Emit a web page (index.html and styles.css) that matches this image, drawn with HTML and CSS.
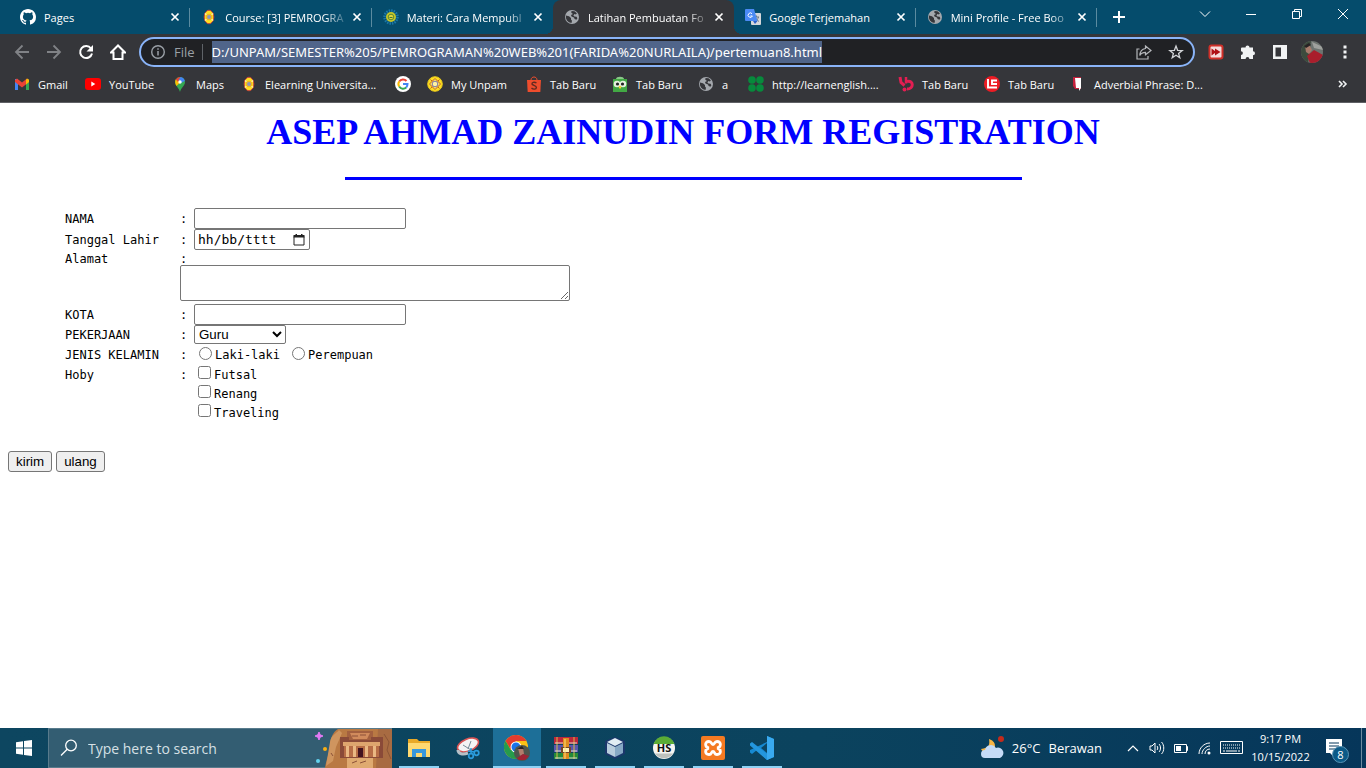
FILE: index.html
```
<!DOCTYPE html>
<html lang="id">
<head>
<meta charset="utf-8">
<meta name="viewport" content="width=device-width, initial-scale=1">
<title>Latihan Pembuatan Form</title>
<link rel="stylesheet" href="styles.css">
</head>
<body>
<svg class="defs" aria-hidden="true">
  <symbol id="x" viewBox="0 0 16 16"><path d="M4.5 4.5l7 7m0-7l-7 7" stroke="#fff" stroke-width="1.7" fill="none"/></symbol>
  <symbol id="globe" viewBox="0 0 16 16"><circle cx="8" cy="8" r="7" fill="#a4a8ad"/><path d="M2 6.5l3 .8 2 1.700v1.500l1 1.200-.5 2.300A6 6 0 0 1 2 6.500zM7.500 2l3 .3 2.400 2-1 1.200-1.500-.5-1 1.500 1 1 2.200.2.800 1.500-1 1.600-1.800-.8-.6-1.600-2.500-.9-.5-1.500L9 5 7.300 3.800z" fill="#35363a"/></symbol>
  <symbol id="unpam" viewBox="0 0 16 16"><ellipse cx="8" cy="8" rx="4.800" ry="6.800" fill="#ffdf20" stroke="#c9443a"/><path d="M4 4.500l8 7m0-7l-8 7" stroke="#fff6b0" stroke-width="1.200"/><circle cx="8" cy="8" r="2.600" fill="#8d96bb" stroke="#f0b820" stroke-width="1.400"/></symbol>
</svg>

<header>
  <nav class="tabstrip" aria-label="Tab">
    <div class="tabs">
      <div class="tab"><svg class="ico" viewBox="0 0 16 16"><path fill="#fff" d="M8 0C3.580 0 0 3.580 0 8c0 3.540 2.290 6.530 5.470 7.590.4.070.55-.17.55-.38 0-.19-.01-.82-.01-1.490-2.010.37-2.530-.49-2.690-.94-.09-.23-.48-.94-.82-1.130-.28-.15-.68-.52-.01-.53.63-.01 1.080.58 1.230.82.72 1.210 1.870.87 2.330.66.07-.52.28-.87.51-1.070-1.780-.2-3.640-.89-3.640-3.950 0-.87.31-1.590.82-2.150-.08-.2-.36-1.020.08-2.120 0 0 .67-.21 2.200.82a7.600 7.600 0 0 1 4 0c1.530-1.040 2.200-.82 2.200-.82.44 1.100.16 1.920.08 2.120.51.56.82 1.270.82 2.150 0 3.070-1.870 3.750-3.650 3.950.29.25.54.73.54 1.480 0 1.070-.01 1.930-.01 2.200 0 .21.15.46.55.38A8 8 0 0 0 16 8c0-4.420-3.580-8-8-8z"/></svg><span class="title">Pages</span><button class="close" aria-label="Tutup"><svg class="ico"><use href="#x"/></svg></button></div>
      <div class="tab"><svg class="ico"><use href="#unpam"/></svg><span class="title fade">Course: [3] PEMROGRA</span><button class="close" aria-label="Tutup"><svg class="ico"><use href="#x"/></svg></button></div>
      <div class="tab nosep"><svg class="ico" viewBox="0 0 16 16"><circle cx="8" cy="8" r="6.500" fill="none" stroke="#1a78a8" stroke-width="2.500" stroke-dasharray="1.500 1"/><circle cx="8" cy="8" r="5" fill="#c3c62a"/><circle cx="8" cy="8" r="2.800" fill="#dfd43a" stroke="#5b8a30"/><path d="M6.500 8.500h3" stroke="#3b7535"/></svg><span class="title fade">Materi: Cara Mempubl</span><button class="close" aria-label="Tutup"><svg class="ico"><use href="#x"/></svg></button></div>
      <div class="tab active"><svg class="ico"><use href="#globe"/></svg><span class="title fade">Latihan Pembuatan Fo</span><button class="close" aria-label="Tutup"><svg class="ico"><use href="#x"/></svg></button></div>
      <div class="tab"><svg class="ico" viewBox="0 0 16 16"><rect x="6" y="4" width="10" height="12" rx="1" fill="#d5d7da"/><path d="M9 8h5m-2.500-1.500V8m2 0c-.5 2-2 3.500-3.500 4.500m.5-3.500c1 1.500 2 2.500 3.500 3.500" stroke="#697886" fill="none"/><path d="M1 0h8l3.500 12H1a1 1 0 0 1-1-1V1a1 1 0 0 1 1-1z" fill="#4a8af4"/><path d="M7 4.700A2.200 2.200 0 1 0 7.400 7H5.400" stroke="#fff" fill="none"/><path d="M8 12h4.500L10 15z" fill="#2b5fc8"/></svg><span class="title">Google Terjemahan</span><button class="close" aria-label="Tutup"><svg class="ico"><use href="#x"/></svg></button></div>
      <div class="tab"><svg class="ico"><use href="#globe"/></svg><span class="title fade">Mini Profile - Free Boo</span><button class="close" aria-label="Tutup"><svg class="ico"><use href="#x"/></svg></button></div>
    </div>
    <button class="newtab" aria-label="Tab baru"><svg class="ico" viewBox="0 0 16 16"><path d="M8 2v12M2 8h12" stroke="#fff" stroke-width="2"/></svg></button>
    <div class="caption">
      <button aria-label="Cari tab"><svg class="ico" viewBox="0 0 16 16"><path d="M3 5.500l5 5 5-5" stroke="#fff" fill="none"/></svg></button>
      <button aria-label="Minimalkan"><svg class="ico" viewBox="0 0 16 16"><path d="M3 8.500h10" stroke="#fff"/></svg></button>
      <button aria-label="Pulihkan"><svg class="ico" viewBox="0 0 16 16"><path d="M3.500 5.500h7v7h-7zM5.500 5.500v-2h7v7h-2" stroke="#fff" fill="none"/></svg></button>
      <button aria-label="Tutup jendela"><svg class="ico" viewBox="0 0 16 16"><path d="M3 3l10 10m0-10L3 13" stroke="#fff" fill="none"/></svg></button>
    </div>
  </nav>

  <div class="toolbar">
    <div class="nav">
      <button aria-label="Kembali"><svg class="ico" viewBox="0 0 16 16"><path d="M15 8H2m6.500-6.500L2 8l6.500 6.500" stroke="#808286" stroke-width="1.800" fill="none"/></svg></button>
      <button aria-label="Maju"><svg class="ico" viewBox="0 0 16 16"><path d="M1 8h13M7.500 1.500L14 8l-6.500 6.500" stroke="#808286" stroke-width="1.800" fill="none"/></svg></button>
      <button aria-label="Muat ulang"><svg class="ico" viewBox="0 0 16 16"><path d="M13 4.500A6 6 0 1 0 14 9.500" stroke="#fff" stroke-width="2" fill="none"/><path d="M15 1v6.500H8.500z" fill="#fff"/></svg></button>
      <button aria-label="Beranda"><svg class="ico" viewBox="0 0 16 16"><path d="M1 8.500L8 1.500l7 7h-2.500V15h-9V8.500z" stroke="#fff" stroke-width="2" fill="none"/></svg></button>
    </div>
    <div class="omnibox">
      <svg class="ico" viewBox="0 0 16 16"><circle cx="8" cy="8" r="6.300" stroke="#9aa0a6" stroke-width="1.400" fill="none"/><path d="M8 7v4.500M8 4.300v1.500" stroke="#9aa0a6" stroke-width="1.500"/></svg>
      <span class="scheme">File</span>
      <input class="url" type="text" aria-label="Alamat situs" value="D:/UNPAM/SEMESTER%205/PEMROGRAMAN%20WEB%201(FARIDA%20NURLAILA)/pertemuan8.html">
      <button class="share" aria-label="Bagikan"><svg class="ico" viewBox="0 0 16 16"><path d="M3.500 5H1v10h11v-3" stroke="#b4b6ba" stroke-width="1.200" fill="none"/><path d="M9.500 2l5.500 4.500-5.500 4.200V8.300C7 8.300 5 9 3.800 11.500 4 7.500 6 5 9.500 4.500z" stroke="#b4b6ba" stroke-width="1.200" fill="none"/></svg></button>
      <button aria-label="Tandai"><svg class="ico" viewBox="0 0 16 16"><path d="M8 2l1.600 4.300 4.600.2-3.600 2.900 1.200 4.400L8 11.300l-3.800 2.500 1.200-4.400-3.600-2.900 4.600-.2z" stroke="#d2d4d7" stroke-width="1.300" fill="none"/></svg></button>
    </div>
    <div class="extras">
      <button aria-label="Ekstensi video"><svg class="ico" viewBox="0 0 16 16"><rect x="1.500" y="1.500" width="13" height="13" rx="2" fill="#f5dada" stroke="#cf2f28" stroke-width="2"/><path d="M3.500 4.500L7 7V4.500L12.500 8 7 11.500V9l-3.500 2.500z" fill="#b01015"/></svg></button>
      <button aria-label="Ekstensi"><svg class="ico" viewBox="0 0 16 16"><path d="M2 3.500h3.500a2 2 0 1 1 4 0H13v3.700a2 2 0 1 1 0 4V15H9.400a1.900 1.900 0 1 0-3.800 0H1v-4a1.900 1.900 0 1 0 0-3.800V4.500a1 1 0 0 1 1-1z" fill="#f1f3f4"/></svg></button>
      <button aria-label="Panel samping"><svg class="ico" viewBox="0 0 16 16"><path d="M1 1h14v14H1zM3.500 3.500v9H9v-9z" fill="#f1f3f4" fill-rule="evenodd"/></svg></button>
      <button aria-label="Profil"><svg class="avatar" viewBox="0 0 22 22"><clipPath id="av"><circle cx="11" cy="11" r="11"/></clipPath><g clip-path="url(#av)"><path d="M0 0h22v22H0z" fill="#6d7470"/><path d="M0 0h10l-3 22H0z" fill="#3c4b3d"/><path d="M11 1l11 5v3l-9-2z" fill="#9ea19d"/><path d="M4 5l4-2 3 6-3 4-3-2z" fill="#a77b6b"/><path d="M3 5l5-3 2 2-5 3z" fill="#272324"/><path d="M6 15l7-6 9 5v8H9z" fill="#a91e2c"/></g></svg></button>
      <button class="narrow" aria-label="Menu"><svg class="ico" viewBox="0 0 16 16"><path d="M6.500 1.500h3v3h-3zm0 5h3v3h-3zm0 5h3v3h-3z" fill="#f1f3f4"/></svg></button>
    </div>
  </div>

  <nav class="bookmarks" aria-label="Bookmark">
    <a href="#"><svg class="ico" viewBox="0 0 16 16"><path d="M1 3h3v11H1z" fill="#4285f4"/><path d="M12 3h3v11h-3z" fill="#34a853"/><path d="M1 4l2-1.500 5 4 5-4L15 4v2l-7 5.500L1 6z" fill="#ea4335"/><path d="M12 4l1-1.500L15 4v2l-3 2.500z" fill="#fbbc04"/></svg>Gmail</a>
    <a href="#"><svg class="ico" viewBox="0 0 16 16"><rect y="2" width="16" height="12" rx="3" fill="#f00"/><path d="M6.300 5.500v5l4-2.500z" fill="#fff"/></svg>YouTube</a>
    <a href="#"><svg class="ico" viewBox="0 0 16 16"><path d="M3 6a5 5 0 0 1 10 0c0 4-4 5.500-5 10C7 11.500 3 10 3 6z" fill="#34a853"/><path d="M3.800 3.300L8 6.500 4.500 10C3.300 8.500 2.600 5.500 3.800 3.300z" fill="#fbbc04"/><path d="M3.800 3.500A5 5 0 0 1 9 1L6 6z" fill="#ea4335"/><path d="M8.500 1A5 5 0 0 1 12.800 5L9 7 6.500 4z" fill="#4285f4"/><circle cx="8" cy="6" r="1.700" fill="#fff"/></svg>Maps</a>
    <a href="#"><svg class="ico"><use href="#unpam"/></svg>Elearning Universita...</a>
    <a href="#" aria-label="Google"><svg class="ico" viewBox="0 0 16 16"><circle cx="8" cy="8" r="8" fill="#fff"/><g fill="none" stroke-width="2"><path d="M4.200 5.500A4.600 4.600 0 0 1 11.500 5" stroke="#ea4335"/><path d="M4.200 5.500a4.600 4.600 0 0 0 0 5" stroke="#fbbc04"/><path d="M4.200 10.500a4.600 4.600 0 0 0 7 1" stroke="#34a853"/><path d="M8 8h4.500c0 1.500-.5 2.700-1.300 3.500" stroke="#4285f4"/></g></svg></a>
    <a href="#"><svg class="ico" viewBox="0 0 16 16"><circle cx="8" cy="8" r="7.300" fill="#ffdf20" stroke="#e8c81c"/><path d="M3.500 3.500l9 9m0-9l-9 9" stroke="#c0602a"/><path d="M8 2.500L13.500 8 8 13.500 2.500 8z" fill="#ffe867" stroke="#bd5d2a"/><circle cx="8" cy="8" r="2.800" fill="#fff3a0" stroke="#7e78a8"/></svg>My Unpam</a>
    <a href="#"><svg class="ico" viewBox="0 0 16 16"><path d="M1 4h14l-.7 12H1.700z" fill="#ee4d2d"/><path d="M5 4c0-4 6-4 6 0" stroke="#ee4d2d" fill="none"/><path d="M10.500 7C8 5.500 5.700 6.500 6 8s4.500 1.300 4.400 3.500S7 13.500 5.500 12" stroke="#612a20" stroke-width="1.400" fill="none"/></svg>Tab Baru</a>
    <a href="#"><svg class="ico" viewBox="0 0 16 16"><path d="M1 3h14v13H1z" fill="#42a944"/><path d="M4 3c0-3 8-3 8 0" fill="#8aca88"/><circle cx="5" cy="8" r="3.300" fill="#e4f0dd"/><circle cx="11" cy="8" r="3.300" fill="#e4f0dd"/><circle cx="5.500" cy="8" r="1.600" fill="#222"/><circle cx="10.500" cy="8" r="1.600" fill="#222"/><path d="M8 9.500l1.500 1.500L8 13l-1.500-2z" fill="#ffd330"/></svg>Tab Baru</a>
    <a href="#"><svg class="ico"><use href="#globe"/></svg>a</a>
    <a href="#"><svg class="ico" viewBox="0 0 16 16" fill="#078a3c"><circle cx="4" cy="4" r="3.800"/><circle cx="12" cy="4" r="3.800"/><circle cx="4" cy="12" r="3.800"/><circle cx="12" cy="12" r="3.800"/></svg>http://learnenglish....</a>
    <a href="#"><svg class="ico" viewBox="0 0 16 16"><path d="M2 1l1 5.500 3.500 3" stroke="#e31e52" stroke-width="3" fill="none"/><path d="M8 1v6.500" stroke="#e31e52" stroke-width="2.500"/><path d="M9 5.500c7-1.500 7 7.500 0 7.500" stroke="#e31e52" stroke-width="3" fill="none"/><circle cx="6.500" cy="13.500" r="2" fill="#e31e52"/></svg>Tab Baru</a>
    <a href="#"><svg class="ico" viewBox="0 0 16 16"><circle cx="8" cy="8" r="8" fill="#ed1c24"/><path d="M4 3v8.500h9M13 4.500H8v3.500h5" stroke="#fff" stroke-width="1.900" fill="none"/></svg>Tab Baru</a>
    <a href="#"><svg class="ico" viewBox="0 0 16 16"><path d="M3 1h8v12H5l-2-3z" fill="#c5203c"/><path d="M5 2h6v10l-2 3v-3H6z" fill="#fff"/></svg>Adverbial Phrase: D...</a>
    <button class="more" aria-label="Bookmark lainnya"><svg class="ico" viewBox="0 0 16 16"><path d="M4 5l3 3-3 3m4-6l3 3-3 3" stroke="#f1f3f4" stroke-width="1.600" fill="none"/></svg></button>
  </nav>
</header>

<main>
  <h1>ASEP AHMAD ZAINUDIN FORM REGISTRATION</h1>
  <hr>
  <form>
    <div class="fields">
      <div class="row"><label class="name" for="nama">NAMA</label><span class="colon">:</span><input class="text" id="nama" type="text"></div>
      <div class="row"><label class="name" for="tgl">Tanggal Lahir</label><span class="colon">:</span><span class="date"><input id="tgl" type="text" placeholder="hh/bb/tttt"><svg viewBox="0 0 12 12" aria-hidden="true"><path d="M1 2.500h10v8.500H1z" stroke="#222" fill="none"/><path d="M.5 1h11v2.500H.500zM2.500 0h1.500v2H2.500zM8 0h1.500v2H8z" fill="#222"/></svg></span></div>
      <div class="row plain"><label class="name" for="alamat">Alamat</label><span class="colon">:</span></div>
      <textarea id="alamat" rows="2"></textarea>
      <div class="row"><label class="name" for="kota">KOTA</label><span class="colon">:</span><input class="text" id="kota" type="text"></div>
      <div class="row short"><label class="name" for="kerja">PEKERJAAN</label><span class="colon">:</span><select id="kerja"><option>Guru</option><option>Wiraswasta</option></select></div>
      <div class="row" role="radiogroup" aria-label="Jenis kelamin"><span class="name">JENIS KELAMIN</span><span class="colon">:</span><input type="radio" name="jk" id="l"><label class="opt" for="l">Laki-laki</label><input type="radio" name="jk" id="p"><label class="opt" for="p">Perempuan</label></div>
      <div class="row short"><span class="name">Hoby</span><span class="colon">:</span><input type="checkbox" id="h1"><label class="opt" for="h1">Futsal</label></div>
      <div class="row short"><span class="name"></span><span class="colon"></span><input type="checkbox" id="h2"><label class="opt" for="h2">Renang</label></div>
      <div class="row short"><span class="name"></span><span class="colon"></span><input type="checkbox" id="h3"><label class="opt" for="h3">Traveling</label></div>
    </div>
    <div class="actions"><button class="push" type="submit">kirim</button><button class="push" type="reset">ulang</button></div>
  </form>
</main>

<footer class="taskbar">
  <button class="start" aria-label="Start"><svg class="ico" viewBox="0 0 16 16"><path d="M0 2.200l7-1v6.300H0zM8 1l8-1v7.500H8zM0 8.500h7v6.300l-7-1zM8 8.500h8V16l-8-1z" fill="#fff"/></svg></button>
  <div class="search">
    <svg class="glass" viewBox="0 0 18 18"><circle cx="11" cy="6.500" r="5.300" stroke="#fff" stroke-width="1.300" fill="none"/><path d="M7.200 10.300L1 16.500" stroke="#fff" stroke-width="1.300"/></svg>
    <input type="text" aria-label="Search" placeholder="Type here to search">
    <svg class="petra" viewBox="0 0 78 40"><path d="M11 40c1-8 4-13 5-21 0-9 3-15 8-18h54v39z" fill="#b97943"/><path d="M16 14c1-7 6-8 9-12l3 3-6 14-3 14-7 5z" fill="#cf955f"/><path d="M64 1h14v39H62z" fill="#a86b42"/><path d="M70 6l5 8-2 8 4 9" stroke="#8c5536" fill="none"/><path d="M33 3h26v9H33z" fill="#a3603f"/><path d="M36 5h20l-3 6H39z" fill="#d18b5c"/><path d="M26 9h9v3h22V9h12v21H26z" fill="#8a4a38"/><path d="M29 14h37v4H29z" fill="#dea56e"/><path d="M30 18h35v11H30z" fill="#b76d46"/><path d="M32 18h3v11h-3zM39 18h3v11h-3zM51 18h3v11h-3zM59 18h3v11h-3z" fill="#eab883"/><path d="M44 20h5v9h-5z" fill="#43131f"/><path d="M33 30h26v10H33z" fill="#dfaa70"/><path d="M38 8h6m2-1h6M38 35l5-2m3 2l6-2M17 25l2 3" stroke="#8c5138"/><path d="M5 4l1.200 2.800L9 8 6.200 9.200 5 12 3.800 9.200 1 8l2.800-1.200z" fill="#e37af5" stroke="#e37af5"/><circle cx="11" cy="21" r="2" fill="#f8af13"/><circle cx="4" cy="33" r="2" fill="#62d3ef"/></svg>
  </div>
  <nav class="apps" aria-label="Aplikasi">
    <button class="open" aria-label="File Explorer"><svg viewBox="0 0 24 24"><path d="M1 3h9l2 2h11v16H1z" fill="#e9a927"/><path d="M1 7h22v14H1z" fill="#ffd970"/><path d="M5 21v-8h14v8h-4v-4H9v4z" fill="#3898dc"/></svg></button>
    <button aria-label="Snipping Tool"><svg viewBox="0 0 24 24"><ellipse cx="12" cy="9" rx="11" ry="6" transform="rotate(-22 12 9)" fill="#f4f4f4" stroke="#d95353" stroke-width="1.600"/><path d="M2 14c0 4 5 5 10 3" stroke="#b7c0c7" stroke-width="3" fill="none"/><path d="M7 9l8 5m0-9l-3 8" stroke="#778b98"/><circle cx="15" cy="20" r="2.300" stroke="#2b9bdc" stroke-width="1.700" fill="none"/><circle cx="20.500" cy="17" r="2.300" stroke="#2b9bdc" stroke-width="1.700" fill="none"/><path d="M12 15l7 1m-4 2V12" stroke="#2b9bdc" stroke-width="1.500"/></svg></button>
    <button class="open current" aria-label="Google Chrome"><svg class="large" viewBox="0 0 26 26"><circle cx="12" cy="12" r="12" fill="#fbc116"/><path d="M1.600 6A12 12 0 0 1 22.400 6H12l-5 9z" fill="#e33b2e"/><path d="M1.600 6A12 12 0 0 0 12 24l5-9H6.800z" fill="#269b4b"/><circle cx="12" cy="12" r="5.500" fill="#fff"/><circle cx="12" cy="12" r="4.500" fill="#1a73e8"/><circle cx="18" cy="18" r="8" fill="#4e554d"/><path d="M14 13h5l1 6-4 2z" fill="#b27d6c"/><path d="M13 14l5-3 2 3z" fill="#292121"/><path d="M13 23l6-4 6 2-4 4h-6z" fill="#9f2434"/></svg></button>
    <button class="open" aria-label="WinRAR"><svg viewBox="0 0 24 24"><path d="M0 1h24v7H0z" fill="#bd273b"/><path d="M0 9h24v7H0z" fill="#5956ad"/><path d="M0 17h24v6H0z" fill="#238a39"/><path d="M3 1v22M20 1v22" stroke="#d7ba48"/><path d="M1 7h22M1 15h22M1 22h22" stroke="#e2dbc8"/><path d="M9 2h6v21H9z" fill="#df8c20"/><path d="M7 11h10v6H7z" fill="#734526"/><path d="M9 12h6v4H9z" fill="#fff1ba"/><path d="M11 3v20" stroke="#ffe07a"/></svg></button>
    <button class="open" aria-label="NetBeans"><svg viewBox="0 0 24 24"><path d="M12 1l10 4v13l-10 5-10-5V5z" fill="#1b376b"/><path d="M12 2l8 4-8 4-8-4z" fill="#e1edf4"/><path d="M4 7l8 4v10l-8-4z" fill="#b8cddd"/><path d="M20 7l-8 4v10l8-4z" fill="#87a9c5"/></svg></button>
    <button class="open" aria-label="Heidi"><svg viewBox="0 0 24 24"><circle cx="12" cy="12" r="11" fill="#f5f5f2"/><path d="M1.500 8a11 11 0 0 1 21 0z" fill="#5aac35"/><path d="M3 17.500h18a11 11 0 0 1-18 0z" fill="#bdc1bd"/><text x="12" y="16" text-anchor="middle">HS</text></svg></button>
    <button class="open" aria-label="XAMPP"><svg viewBox="0 0 24 24"><rect width="24" height="24" rx="2" fill="#f47a22"/><path d="M8 5.500c-5 0-4 6 0 6.500-4 .5-5 6.500 0 6.500 3 0 2-3 4-3s1 3 4 3c5 0 4-6 0-6.500 4-.5 5-6.500 0-6.500-3 0-2 3-4 3s-1-3-4-3z" fill="none" stroke="#fff" stroke-width="2.800"/></svg></button>
    <button class="open" aria-label="Visual Studio Code"><svg viewBox="0 0 24 24"><path d="M17 0l7 3v18l-7 3L7 14l-5 4-2-1.500V14l17-8z" fill="#1689d1"/><path d="M17 0v24L0 9.500V7.500L2 6l15 12z" fill="#2497de"/><path d="M17 0l7 3v18l-7 3z" fill="#39aaf0"/><path d="M17 7v10l-6-5z" fill="#0b4562"/></svg></button>
  </nav>
  <div class="tray">
    <button class="weather"><svg viewBox="0 0 24 24"><path d="M9 3c1 6 0 9-8 10 2 5 14 5 14-3 0-4-3-6-6-7z" fill="#f7b545"/><path d="M5 22a4 4 0 0 1 0-8 6 6 0 0 1 11-2 5 5 0 0 1 4 10z" fill="#c5dbf7"/><circle cx="21" cy="3" r="3" fill="#c42b1c"/></svg><span>26°C</span><span>Berawan</span></button>
    <button aria-label="Ikon tersembunyi"><svg class="ico" viewBox="0 0 16 16"><path d="M3 11l5-5 5 5" stroke="#fff" stroke-width="1.200" fill="none"/></svg></button>
    <button aria-label="Volume"><svg class="ico" viewBox="0 0 16 16"><path d="M1 6h2l3-3v10l-3-3H1zM8 6c1 1 1 3 0 4m2-6c2 2 2 6 0 8m2.500-10c3 3 3 9 0 12" stroke="#fff" fill="none"/></svg></button>
    <button aria-label="Baterai"><svg class="ico" viewBox="0 0 16 16"><path d="M1.500 4.500h12v8h-12zM13.500 6.500h1v4h-1" stroke="#fff" fill="none"/><path d="M3 6h5v5H3z" fill="#fff"/></svg></button>
    <button aria-label="Jaringan"><svg class="ico" viewBox="0 0 16 16"><path d="M2 14C2 8 7 3 13 3M5 14c0-4 4-8 8-8M8 14c0-3 2-5 5-5" stroke="#fff" fill="none"/><circle cx="12" cy="13" r="1.500" fill="#fff"/></svg></button>
    <button class="wide" aria-label="Keyboard"><svg class="kbd" viewBox="0 0 24 14"><path d="M.5.500h22v12H.500z" stroke="#fff" fill="none"/><path d="M3 4h17M3 7h17" stroke="#fff" stroke-dasharray="1 1"/><path d="M3 10h2m1 0h11m1 0h2" stroke="#fff"/></svg></button>
    <button class="clock"><span>9:17 PM</span><span>10/15/2022</span></button>
    <button class="notice" aria-label="8 notifikasi"><svg viewBox="0 0 26 26"><path d="M1 4h16v14H8v3l-3-3H1z" fill="#fff"/><path d="M4 8h10M4 11h10M4 14h7" stroke="#06365a"/></svg><span class="badge">8</span></button>
  </div>
</footer>
</body>
</html>
```
FILE: styles.css
```
* { box-sizing: border-box; }
body {
  margin: 0;
  min-height: 100vh;
  display: flex;
  flex-direction: column;
  background: #fff;
  font-family: "Open Sans", sans-serif;
  font-size: 11px;
  color: #fff;
}
header button, .taskbar button {
  display: flex;
  align-items: center;
  justify-content: center;
  flex: none;
  border: 0;
  padding: 0;
  background: none;
  color: inherit;
  font: inherit;
}
svg { display: block; flex: none; }
.defs { position: absolute; width: 0; height: 0; }
.ico { width: 16px; height: 16px; }

/* Tabs */
.tabstrip { display: flex; height: 34px; background: #054c6c; padding-left: 9px; }
.tabs { display: flex; flex: 0 1 1088px; min-width: 0; }
.tab {
  position: relative;
  flex: 1 1 0;
  min-width: 0;
  display: flex;
  align-items: center;
  padding: 0 7px 0 11px;
}
.tab::after { content: ""; position: absolute; right: 0; top: 8px; height: 19px; width: 1px; background: #5b8ba0; }
.tab.nosep::after { display: none; }
.tab.active { background: #35363a; border-radius: 8px 8px 0 0; }
.tab.active::before, .tab.active::after {
  content: "";
  position: absolute;
  top: auto;
  bottom: 0;
  width: 8px;
  height: 8px;
  background: radial-gradient(circle at 0 0, transparent 8px, #35363a 8px);
}
.tab.active::before { left: -8px; }
.tab.active::after { right: -8px; background: radial-gradient(circle at 100% 0, transparent 8px, #35363a 8px); }
.title {
  flex: 1;
  min-width: 0;
  margin-left: 8px;
  overflow: hidden;
  white-space: nowrap;
}
.title.fade { mask-image: linear-gradient(to right, #000 calc(100% - 24px), transparent); }
.newtab { width: 44px; }
.caption { display: flex; margin-left: auto; }
.caption button { width: 46px; height: 28px; }

/* Toolbar */
.toolbar { display: flex; align-items: center; height: 36px; background: #35363a; padding: 0 4px 0 6px; }
.nav { display: flex; margin-right: 5px; }
.nav button { width: 32px; height: 32px; }
.omnibox {
  flex: 1;
  min-width: 0;
  display: flex;
  align-items: center;
  height: 30px;
  padding: 0 9px 0 9px;
  background: #202124;
  border: 2px solid #8ab4f8;
  border-radius: 15px;
  font-size: 13px;
}
.scheme { margin-left: 8px; padding-right: 7px; border-right: 1px solid #5f6368; color: #9aa0a6; line-height: 16px; }
.url {
  flex: 0 1 auto;
  field-sizing: content;
  min-width: 0;
  height: 22px;
  margin-left: 9px;
  padding: 0;
  border: 0;
  background: #50658a;
  color: #fff;
  font: 13px "Noto Sans", sans-serif;
}
.share { margin: 0 16px 0 auto; }
.extras { display: flex; margin-left: 5px; }
.extras button { width: 32px; height: 32px; }
.extras .narrow { width: 34px; }
.avatar { width: 22px; height: 22px; }

/* Bookmarks */
.bookmarks {
  display: grid;
  grid-template-columns: 71px 87px 69px 154px 32px 99px 86px 86px 50px 150px 86px 86px 150px 1fr;
  align-items: center;
  height: 33px;
  padding: 0 15px 4px 14px;
  background: #35363a;
  border-bottom: 1px solid #5f6065;
}
.bookmarks a { display: flex; align-items: center; gap: 8px; color: #fff; text-decoration: none; white-space: nowrap; }
.more { justify-self: end; }

/* Registration page */
main { flex: 1; padding: 8px; color: #000; }
h1 { margin: 0; text-align: center; font: bold 36px/42px "Liberation Serif", serif; color: #00f; }
hr { box-sizing: content-box; width: 50%; height: 1px; margin: 24px auto 28px; border: 1px solid #00f; background: #00f; }
.fields { padding-left: 57px; font: 12px/15px "DejaVu Sans Mono", monospace; }
.row { display: flex; align-items: center; min-height: 21px; }
.row.plain { min-height: 15px; }
.row.short { min-height: 19px; }
.name, .colon, .opt { padding-top: 2px; }
.name { width: 115px; }
.colon { width: 14px; }
.text, .date { width: 212px; height: 21px; border: 1px solid #767676; border-radius: 2px; background: #fff; }
.date { display: flex; align-items: center; width: 116px; padding: 0 4px 0 3px; }
.date input { flex: 1; min-width: 0; padding: 0; border: 0; outline: 0; font: 13px "DejaVu Sans Mono", monospace; }
.date input::placeholder { color: #000; }
.date svg { width: 12px; height: 12px; }
textarea { display: block; width: 390px; height: 36px; margin: 0 0 3px 115px; border: 1px solid #767676; border-radius: 2px; }
.plain .name, .plain .colon { margin-bottom: -2px; }
select { width: 92px; height: 19px; border: 1px solid #767676; border-radius: 2px; background: #fff; font-family: "Liberation Sans", sans-serif; }
.row input[type="radio"] { width: 13px; height: 13px; margin: 0 3px 2px 5px; }
.row .opt + input[type="radio"] { margin-left: 12px; }
.row input[type="checkbox"] { width: 13px; height: 13px; margin: 0 3px 4px 4px; }
.actions { display: flex; gap: 4px; margin-top: 29px; }
.push { height: 21px; padding: 0 7px; border: 1px solid #767676; border-radius: 3px; background: #efefef; color: #000; font-family: "Liberation Sans", sans-serif; }

/* Taskbar */
.taskbar { display: flex; height: 40px; background: linear-gradient(to right, #0d4660, #0b435e 60%, #06365a); }
.start { width: 48px; }
.search { flex: 0 1 344px; display: flex; align-items: center; padding-left: 11px; background: #335d72; border: 1px solid #587b8c; border-right: 0; }
.glass { width: 18px; height: 18px; }
.search input { flex: 1; min-width: 0; margin-left: 10px; padding: 0; border: 0; background: none; font: 14px "Open Sans", sans-serif; color: #fff; }
.search input::placeholder { color: #d6e0e5; }
.petra { width: 78px; height: 40px; }
.apps { display: flex; gap: 1px; margin-left: 3px; }
.apps button { position: relative; width: 48px; }
.apps svg { width: 24px; height: 24px; }
.apps .large { width: 26px; height: 26px; }
.apps text { font: bold 11px "Open Sans", sans-serif; fill: #111; }
.open::after { content: ""; position: absolute; left: 4px; right: 4px; bottom: 0; height: 2px; background: #8ed2f5; }
.apps .current { background: #1d6f98; }
.current::after { left: 0; right: 0; }
.tray { display: flex; margin-left: auto; padding-right: 4px; }
.tray button { width: 24px; }
.tray .weather { width: auto; gap: 8px; margin-right: 19px; font-size: 13px; }
.weather svg { width: 24px; height: 24px; }
.tray .wide { width: 30px; }
.kbd { width: 24px; height: 14px; }
.tray .clock { width: 67px; flex-direction: column; font-size: 11px; line-height: 18px; }
.tray .notice { position: relative; width: 48px; border-right: 1px solid #6c8ba0; }
.notice svg { width: 26px; height: 26px; }
.badge { position: absolute; left: 18px; top: 18px; width: 17px; height: 17px; border: 1px solid #5994b5; border-radius: 50%; background: #0b5a87; font-size: 11px; line-height: 15px; text-align: center; }
```
